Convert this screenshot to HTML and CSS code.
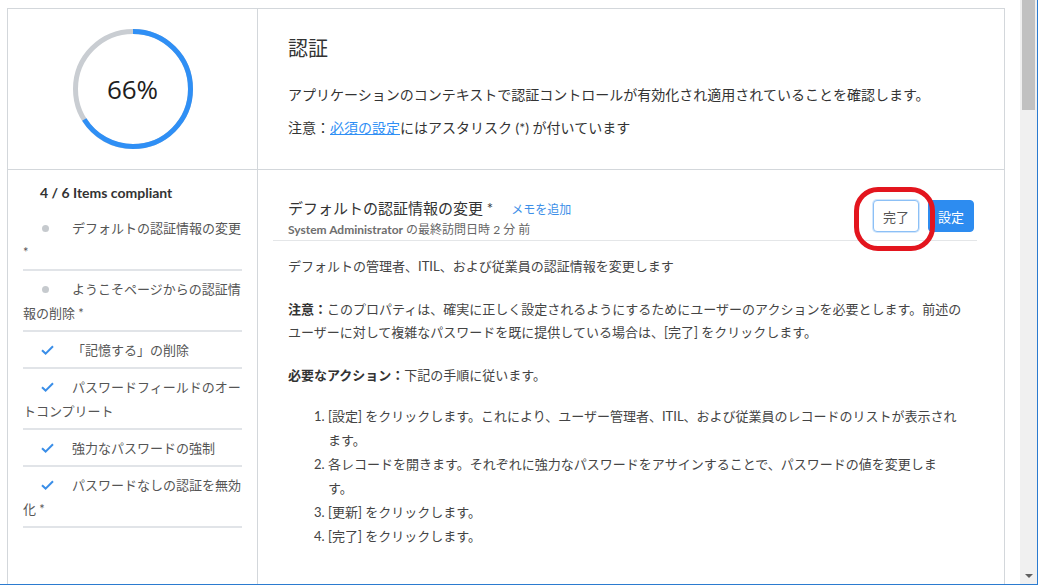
FILE: index.html
```html
<!DOCTYPE html>
<html lang="ja">
<head>
<meta charset="utf-8">
<title>認証</title>
<link rel="stylesheet" href="styles.css">
</head>
<body>
<div class="page">
  <div class="panel">
    <div class="score">
      <div class="donut">
        <svg class="ring" width="120" height="120" viewBox="0 0 120 120">
          <circle cx="60" cy="60" r="57.5" fill="none" stroke="#c9cdd2" stroke-width="5"/>
          <circle cx="60" cy="60" r="57.5" fill="none" stroke="#2f8ff5" stroke-width="5" stroke-dasharray="238.4 400" transform="rotate(-90 60 60)"/>
        </svg>
        <span class="pct">66%</span>
      </div>
    </div>
    <div class="intro">
      <h1 class="intro-title">認証</h1>
      <p class="intro-desc">アプリケーションのコンテキストで認証コントロールが有効化され適用されていることを確認します。</p>
      <p class="intro-note">注意：<a class="link" href="#">必須の設定</a>にはアスタリスク (*) が付いています</p>
    </div>
    <div class="side">
      <div class="side-head">4 / 6 Items compliant</div>
      <ul class="items">
        <li class="item"><span class="ico"><span class="dot"></span></span>デフォルトの認証情報の変更 *</li>
        <li class="item"><span class="ico"><span class="dot"></span></span>ようこそページからの認証情報の削除 *</li>
        <li class="item"><span class="ico"><svg class="check" width="13" height="10" viewBox="0 0 13 10"><path d="M1 5.2 L4.6 8.6 L12 1.2" fill="none" stroke="#3a8ee8" stroke-width="2"/></svg></span>「記憶する」の削除</li>
        <li class="item"><span class="ico"><svg class="check" width="13" height="10" viewBox="0 0 13 10"><path d="M1 5.2 L4.6 8.6 L12 1.2" fill="none" stroke="#3a8ee8" stroke-width="2"/></svg></span>パスワードフィールドのオートコンプリート</li>
        <li class="item"><span class="ico"><svg class="check" width="13" height="10" viewBox="0 0 13 10"><path d="M1 5.2 L4.6 8.6 L12 1.2" fill="none" stroke="#3a8ee8" stroke-width="2"/></svg></span>強力なパスワードの強制</li>
        <li class="item"><span class="ico"><svg class="check" width="13" height="10" viewBox="0 0 13 10"><path d="M1 5.2 L4.6 8.6 L12 1.2" fill="none" stroke="#3a8ee8" stroke-width="2"/></svg></span>パスワードなしの認証を無効化 *</li>
      </ul>
    </div>
    <div class="detail">
      <div class="detail-head">
        <div class="head-text">
          <div class="head-title">デフォルトの認証情報の変更 *<a class="memo" href="#">メモを追加</a></div>
          <div class="head-sub"><b class="who">System Administrator</b> の最終訪問日時 2 分 前</div>
        </div>
        <div class="actions">
          <button class="btn btn-done">完了</button>
          <button class="btn btn-set">設定</button>
          <span class="mark"></span>
        </div>
      </div>
      <div class="detail-body">
        <p class="para">デフォルトの管理者、ITIL、および従業員の認証情報を変更します</p>
        <p class="para"><b>注意：</b>このプロパティは、確実に正しく設定されるようにするためにユーザーのアクションを必要とします。前述のユーザーに対して複雑なパスワードを既に提供している場合は、[完了] をクリックします。</p>
        <p class="para para-lead"><b>必要なアクション：</b>下記の手順に従います。</p>
        <ol class="steps">
          <li>[設定] をクリックします。これにより、ユーザー管理者、ITIL、および従業員のレコードのリストが表示されます。</li>
          <li>各レコードを開きます。それぞれに強力なパスワードをアサインすることで、パスワードの値を変更します。</li>
          <li>[更新] をクリックします。</li>
          <li>[完了] をクリックします。</li>
        </ol>
      </div>
    </div>
  </div>
</div>
<div class="scrollbar">
  <div class="thumb"></div>
  <div class="arrow"></div>
</div>
<div class="frame"></div>
</body>
</html>
```

FILE: styles.css
```css
html, body {
  margin: 0;
  padding: 0;
  height: 100%;
  overflow: hidden;
  background: #ffffff;
}

body {
  font-family: "Lato", "Noto Sans CJK JP", sans-serif;
  color: #333333;
}

.page {
  width: 1020px;
}

.panel {
  margin: 8px 0 0 7px;
  width: 998px;
  min-height: 620px;
  box-sizing: border-box;
  border: 1px solid #d3d7db;
  border-bottom: 0;
  display: grid;
  grid-template-columns: 250px 1fr;
  grid-template-rows: 161px 1fr;
}

/* score cell */
.score {
  border-right: 1px solid #d3d7db;
  border-bottom: 1px solid #d3d7db;
  display: flex;
  align-items: center;
  justify-content: center;
}

.donut {
  display: grid;
  place-items: center;
  width: 120px;
  height: 120px;
}

.ring, .pct {
  grid-area: 1 / 1;
}

.pct {
  font-family: "Open Sans", sans-serif;
  font-size: 26px;
  color: #1e1e1e;
  line-height: 1;
}

/* intro cell */
.intro {
  border-bottom: 1px solid #d3d7db;
  padding: 25px 30px 0 30px;
}

.intro-title {
  margin: 0;
  font-size: 20px;
  font-weight: normal;
  line-height: 28px;
  color: #333;
}

.intro-desc {
  margin: 23px 0 0;
  font-size: 14px;
  line-height: 20px;
  color: #333;
}

.intro-note {
  margin: 13px 0 0;
  font-size: 14px;
  line-height: 20px;
  color: #333;
}

.link {
  color: #2f8ff5;
  text-decoration: underline;
}

/* side list */
.side {
  border-right: 1px solid #d3d7db;
  padding: 13px 15px 0 15px;
}

.side-head {
  padding-left: 17px;
  font-size: 14px;
  font-weight: bold;
  line-height: 20px;
  color: #333;
  margin-bottom: 7px;
}

.items {
  list-style: none;
  margin: 0;
  padding: 0;
}

.item {
  font-size: 13px;
  line-height: 24px;
  color: #555;
  padding: 6px 0 5px;
  border-bottom: 2px solid #e1e4e8;
}

.ico {
  display: inline-block;
  width: 49px;
  box-sizing: border-box;
  padding-left: 18px;
  vertical-align: middle;
  line-height: 10px;
  margin-bottom: 5px;
}

.dot {
  display: inline-block;
  width: 7px;
  height: 7px;
  margin-left: 1px;
  border-radius: 50%;
  background: #c6cace;
}

.check {
  display: inline-block;
  vertical-align: middle;
}

/* detail */
.detail {
  padding: 28px 27px 0 15px;
}

.detail-head {
  display: flex;
  justify-content: space-between;
  align-items: flex-start;
  border-bottom: 1px solid #e4e6e8;
  padding: 0 3px 2px 15px;
}

.head-title {
  font-size: 15px;
  line-height: 20px;
  color: #333;
}

.memo {
  margin-left: 18px;
  font-size: 12px;
  color: #3d8fe8;
  text-decoration: none;
}

.head-sub {
  margin-top: 2px;
  font-size: 12px;
  line-height: 16px;
  color: #666;
}

.who {
  color: #6e6e6e;
}

.actions {
  position: relative;
  display: flex;
  gap: 9px;
  margin-top: 2px;
}

.btn {
  height: 32px;
  width: 46px;
  padding: 0;
  border-radius: 4px;
  font-family: "Noto Sans CJK JP", sans-serif;
  font-size: 13px;
}

.btn-done {
  background: #fff;
  color: #555;
  border: 1px solid #8cc0f6;
  box-shadow: 0 0 0 1px #d2e6fc;
}

.btn-set {
  background: #2d8cf0;
  color: #fff;
  border: 1px solid #2d8cf0;
}

.mark {
  position: absolute;
  left: -19px;
  top: -13px;
  width: 81px;
  height: 64px;
  box-sizing: border-box;
  border: 5px solid #e3151e;
  border-radius: 24px;
}

.detail-body {
  padding: 14px 5px 0 15px;
  font-size: 13px;
  line-height: 23px;
  color: #444;
}

.para {
  margin: 0 0 20px;
}

.para-lead {
  margin-bottom: 17px;
}

.para b {
  color: #333;
}

.steps {
  margin: 0;
  padding: 0 12px 0 40px;
  line-height: 24px;
}

/* window chrome */
.scrollbar {
  position: fixed;
  top: 0;
  right: 1px;
  bottom: 1px;
  width: 17px;
  background: #f0f0f0;
}

.thumb {
  margin: 0 2px;
  height: 110px;
  background: #c1c1c1;
}

.arrow {
  position: absolute;
  bottom: 6px;
  left: 5px;
  width: 0;
  height: 0;
  border-left: 4px solid transparent;
  border-right: 4px solid transparent;
  border-top: 4px solid #606060;
}

.frame {
  position: fixed;
  inset: 0;
  border-right: 1px solid #2b7bd0;
  border-bottom: 1px solid #2b7bd0;
  pointer-events: none;
}
```
